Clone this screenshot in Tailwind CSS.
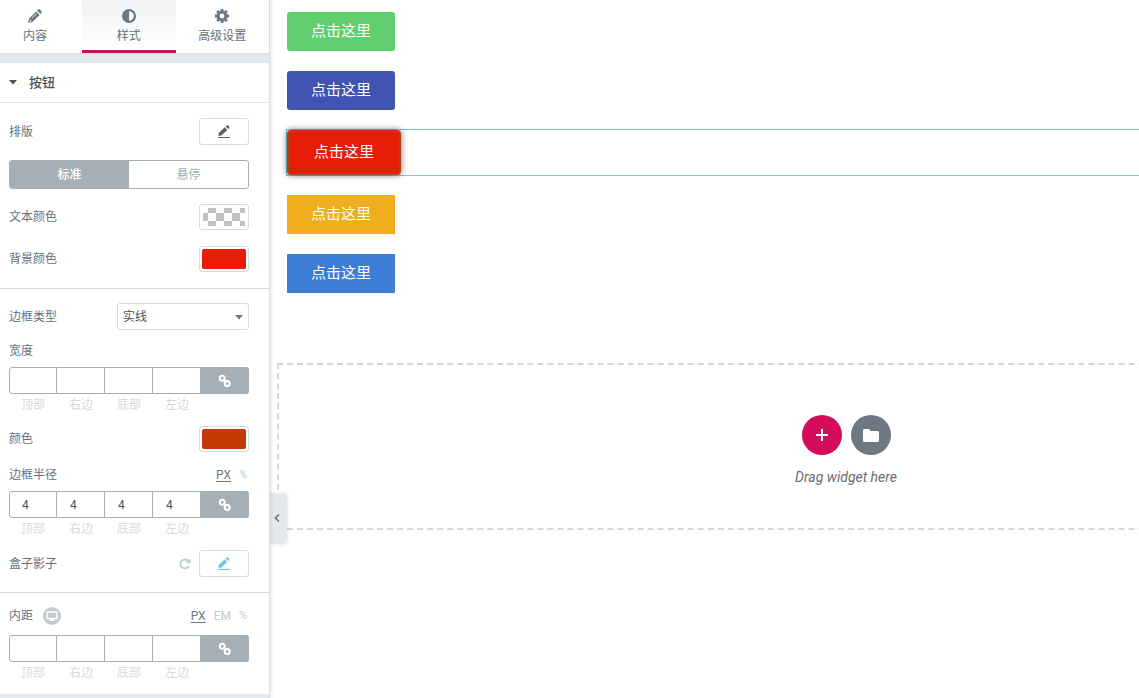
<!DOCTYPE html>
<html lang="zh-CN">
<head>
    <meta charset="UTF-8">
    <meta name="viewport" content="width=device-width, initial-scale=1.0">
    <title>按钮</title>
    <script src="https://cdn.jsdelivr.net/npm/@tailwindcss/browser@4"></script>
</head>
<body class="flex h-screen overflow-hidden bg-white font-['Roboto','Noto_Sans_CJK_SC',sans-serif] text-xs text-[#66717a]">
    <!-- Shared icons -->
    <svg class="hidden">
        <symbol id="link" viewBox="0 0 14 14">
            <g fill="none" stroke="currentColor" stroke-width="2">
                <circle cx="4.200" cy="4.200" r="2.500"/>
                <circle cx="9.200" cy="9.400" r="2.500"/>
                <path d="M5.200 5.200l3 3"/>
            </g>
        </symbol>
        <symbol id="edit" viewBox="0 0 14 14">
            <path fill="currentColor" d="M1.400 10.900l.4-2.900 5.900-5.700 2.600 2.600-5.900 5.700zM8.600 1.500l.9-.9c.5-.5 1.100-.5 1.600 0l1 1c.5.5.5 1.100 0 1.600l-.9.9zM1 12h12v1H1z"/>
        </symbol>
    </svg>

    <!-- Panel -->
    <aside class="z-10 flex w-[270px] shrink-0 flex-col border-r border-[#dcdfe2] bg-[#e6e9ec] shadow-[1px_0_4px_rgba(0,0,0,0.12)]">
        <nav class="flex h-[53px] shrink-0 bg-white shadow-xs">
            <button class="flex w-[82px] flex-col items-center gap-1 pt-2 pr-3">
                <svg class="size-4 text-[#6d7882]" viewBox="0 0 16 16" fill="currentColor"><path fill-rule="evenodd" d="M1.200 14.800l.8-4.300 7.100-7.100 3.500 3.500-7.100 7.100zM3 11.400l-.4 1.400.7.700 1.400-.4zM4.600 9.900l.4.400 4.400-4.400-.4-.4z"/><path d="M9.900 2.600l1-1c.6-.6 1.300-.6 1.900 0l1.600 1.600c.6.6.6 1.300 0 1.900l-1 1z"/></svg>
                <span class="leading-4">内容</span>
            </button>
            <button class="flex flex-1 flex-col items-center gap-1 border-b-3 border-[#b51a5e] bg-linear-to-b from-[#f1f2f3] to-white pt-2">
                <svg class="size-4 text-[#6d7882]" viewBox="0 0 16 16" fill="currentColor"><path fill-rule="evenodd" d="M8 1a7 7 0 1 0 0 14A7 7 0 0 0 8 1zm0 2.200v9.600a4.800 4.800 0 0 1 0-9.600z" transform="matrix(-1 0 0 1 16 0)"/></svg>
                <span class="leading-4">样式</span>
            </button>
            <button class="flex flex-1 flex-col items-center gap-1 pt-2">
                <svg class="size-4 text-[#6d7882]" viewBox="0 0 16 16"><circle cx="8" cy="8" r="3.900" fill="none" stroke="currentColor" stroke-width="3"/><path fill="none" stroke="currentColor" stroke-width="2.800" d="M8 1v2.500M8 12.500V15M1 8h2.500M12.500 8H15M3.100 3.100l1.700 1.700M11.200 11.200l1.700 1.700M3.100 12.900l1.700-1.700M11.200 4.800l1.700-1.700"/></svg>
                <span class="leading-4">高级设置</span>
            </button>
        </nav>

        <div class="mt-[10px] bg-white">
            <button class="flex h-10 w-full items-center gap-3 border-b border-[#e6e9ec] pl-[9px] text-[13px] font-medium text-[#495157]">
                <svg class="w-2" viewBox="0 0 8 5" fill="currentColor"><path d="M0 0h8L4 4.500z"/></svg>
                按钮
            </button>

            <!-- Typography and colours -->
            <section class="border-b border-[#d5dadf] pt-[15px] pr-5 pb-4 pl-[9px]">
                <div class="flex items-center justify-between">
                    <span>排版</span>
                    <button aria-label="排版" class="flex h-[27px] w-[50px] items-center justify-center rounded-[3px] border border-[#d5dadf] text-[#556068]">
                        <svg class="size-[14px]"><use href="#edit"/></svg>
                    </button>
                </div>
                <div class="mt-[15px] flex h-[29px] overflow-hidden rounded-[3px] border border-[#a4afb7] text-[#a4afb7]">
                    <button class="flex-1 bg-[#a4afb7] font-medium text-white">标准</button>
                    <button class="flex-1">悬停</button>
                </div>
                <div class="mt-[15px] flex items-center justify-between">
                    <span>文本颜色</span>
                    <button aria-label="文本颜色" class="h-[26px] w-[50px] rounded-[3px] border border-[#d5dadf] p-[3px]">
                        <svg class="h-[18px] w-[42px]" viewBox="0 0 42 18" fill="#c2c2c2"><path d="M5 0h8v5H5zM21 0h8v5h-8zM37 0h5v5h-5zM0 5h5v8H0zM13 5h8v8h-8zM29 5h8v8h-8zM5 13h8v5H5zM21 13h8v5h-8zM37 13h5v5h-5z"/></svg>
                    </button>
                </div>
                <div class="mt-4 flex items-center justify-between">
                    <span>背景颜色</span>
                    <button aria-label="背景颜色" class="h-[26px] w-[50px] rounded-[3px] border border-[#d5dadf] p-[2px]"><span class="block h-full rounded-xs bg-[#e71e07]"></span></button>
                </div>
            </section>

            <!-- Border -->
            <section class="border-b border-[#d5dadf] pt-[14px] pr-5 pb-[15px] pl-[9px]">
                <div class="flex items-center justify-between">
                    <label for="border">边框类型</label>
                    <div class="relative">
                        <select id="border" class="h-[27px] w-[132px] appearance-none rounded-[3px] border border-[#d5dadf] bg-white pl-[5px] text-[#495157]">
                            <option>实线</option>
                        </select>
                        <svg class="pointer-events-none absolute top-3 right-[6px] w-2 text-[#6d7882]" viewBox="0 0 8 5" fill="currentColor"><path d="M0 0h8L4 4.500z"/></svg>
                    </div>
                </div>
                <p class="mt-[13px] leading-4">宽度</p>
                <div class="mt-2 grid grid-cols-5">
                    <input id="w-top" class="h-[27px] min-w-0 rounded-l-[3px] border border-[#a4afb7] pl-3">
                    <input id="w-right" class="h-[27px] min-w-0 border-y border-r border-[#a4afb7] pl-3">
                    <input id="w-bottom" class="h-[27px] min-w-0 border-y border-r border-[#a4afb7] pl-3">
                    <input id="w-left" class="h-[27px] min-w-0 border-y border-[#a4afb7] pl-3">
                    <button aria-label="链接" class="-ml-px flex items-center justify-center rounded-r-[3px] bg-[#a4afb7] text-white"><svg class="size-[14px]"><use href="#link"/></svg></button>
                </div>
                <div class="mt-[3px] grid grid-cols-5 text-center leading-4 text-[#d5dadf]">
                    <label for="w-top">顶部</label><label for="w-right">右边</label><label for="w-bottom">底部</label><label for="w-left">左边</label>
                </div>
                <div class="mt-[13px] flex items-center justify-between">
                    <span>颜色</span>
                    <button aria-label="颜色" class="h-[26px] w-[50px] rounded-[3px] border border-[#d5dadf] p-[2px]"><span class="block h-full rounded-xs bg-[#c33a07]"></span></button>
                </div>
                <div class="mt-[15px] flex justify-between leading-4">
                    <span>边框半径</span>
                    <div class="flex gap-2 pr-[2px] text-[#c2cbd2]">
                        <button class="text-[#6d7882] underline underline-offset-2">PX</button>
                        <button class="text-[11px]">%</button>
                    </div>
                </div>
                <div class="mt-2 grid grid-cols-5 text-[#495157]">
                    <input id="r-top" value="4" class="h-[27px] min-w-0 rounded-l-[3px] border border-[#a4afb7] pl-3">
                    <input id="r-right" value="4" class="h-[27px] min-w-0 border-y border-r border-[#a4afb7] pl-[13px]">
                    <input id="r-bottom" value="4" class="h-[27px] min-w-0 border-y border-r border-[#a4afb7] pl-[13px]">
                    <input id="r-left" value="4" class="h-[27px] min-w-0 border-y border-[#a4afb7] pl-[13px]">
                    <button aria-label="链接" class="-ml-px flex items-center justify-center rounded-r-[3px] bg-[#a4afb7] text-white"><svg class="size-[14px]"><use href="#link"/></svg></button>
                </div>
                <div class="mt-[3px] grid grid-cols-5 text-center leading-4 text-[#d5dadf]">
                    <label for="r-top">顶部</label><label for="r-right">右边</label><label for="r-bottom">底部</label><label for="r-left">左边</label>
                </div>
                <div class="mt-[13px] flex items-center">
                    <span>盒子影子</span>
                    <button aria-label="重置" class="mr-2 ml-auto text-[#c2cbd2]">
                        <svg class="size-3" viewBox="0 0 12 12"><path fill="none" stroke="currentColor" stroke-width="2" d="M9.800 8.300A4.500 4.500 0 1 1 9.400 3"/><path fill="currentColor" d="M11.500.6v4.600H6.900z"/></svg>
                    </button>
                    <button aria-label="盒子影子" class="flex h-[27px] w-[50px] items-center justify-center rounded-[3px] border border-[#d5dadf] text-[#6ec9e4]">
                        <svg class="size-[14px]"><use href="#edit"/></svg>
                    </button>
                </div>
            </section>

            <!-- Padding -->
            <section class="pt-[13px] pr-5 pb-[13px] pl-[9px]">
                <div class="flex h-5 items-center">
                    <span>内距</span>
                    <button aria-label="桌面" class="ml-[10px] flex size-[18px] items-center justify-center rounded-full bg-[#c2cbd2] text-white">
                        <svg class="size-3" viewBox="0 0 12 12"><path fill="none" stroke="currentColor" stroke-width="1.300" d="M1 2h10v6.500H1z"/><path fill="currentColor" d="M3.500 9h5v2h-5z"/></svg>
                    </button>
                    <div class="ml-auto flex gap-2 pr-[2px] leading-4 text-[#c2cbd2]">
                        <button class="text-[#6d7882] underline underline-offset-2">PX</button>
                        <button>EM</button>
                        <button class="text-[11px]">%</button>
                    </div>
                </div>
                <div class="mt-[9px] grid grid-cols-5">
                    <input id="p-top" class="h-[27px] min-w-0 rounded-l-[3px] border border-[#a4afb7] pl-3">
                    <input id="p-right" class="h-[27px] min-w-0 border-y border-r border-[#a4afb7] pl-3">
                    <input id="p-bottom" class="h-[27px] min-w-0 border-y border-r border-[#a4afb7] pl-3">
                    <input id="p-left" class="h-[27px] min-w-0 border-y border-[#a4afb7] pl-3">
                    <button aria-label="链接" class="-ml-px flex items-center justify-center rounded-r-[3px] bg-[#a4afb7] text-white"><svg class="size-[14px]"><use href="#link"/></svg></button>
                </div>
                <div class="mt-[3px] grid grid-cols-5 text-center leading-4 text-[#d5dadf]">
                    <label for="p-top">顶部</label><label for="p-right">右边</label><label for="p-bottom">底部</label><label for="p-left">左边</label>
                </div>
            </section>
        </div>
    </aside>

    <!-- Preview -->
    <main class="relative min-w-0 flex-1 overflow-hidden">
        <div class="flex flex-col items-start gap-5 pt-3 pl-[17px] text-[15px] leading-[15px] text-white">
            <a href="#" class="rounded-[3px] bg-[#61ce70] px-6 py-3">点击这里</a>
            <a href="#" class="rounded-[3px] bg-[#4054b2] px-6 py-3">点击这里</a>
            <div class="flex w-full ring-1 ring-[#7cc9d9]">
                <a href="#" class="rounded-[4px] border-2 border-[#ab4419] bg-[#e71e07] px-[25px] py-[13px] shadow-[0_0_6px_rgba(0,0,0,0.6)]">点击这里</a>
            </div>
            <a href="#" class="bg-[#efae1d] px-6 py-3">点击这里</a>
            <a href="#" class="bg-[#3d7dd6] px-6 py-3">点击这里</a>
        </div>

        <div class="mt-[70px] ml-[7px] flex w-[1138px] flex-col items-center border-2 border-dashed border-[#d5d8da] pt-[50px] pb-[41px]">
            <div class="flex gap-[9px]">
                <button aria-label="Add" class="flex size-10 items-center justify-center rounded-full bg-[#d30c5c] text-white">
                    <svg class="size-3" viewBox="0 0 12 12" fill="none" stroke="currentColor" stroke-width="2"><path d="M6 0v12M0 6h12"/></svg>
                </button>
                <button aria-label="Template" class="flex size-10 items-center justify-center rounded-full bg-[#6d7882] text-white">
                    <svg class="h-[13px] w-4" viewBox="0 0 16 13" fill="currentColor"><path d="M1.500 0H6l1.500 2h7A1.500 1.500 0 0 1 16 3.500v8a1.500 1.500 0 0 1-1.500 1.500h-13A1.500 1.500 0 0 1 0 11.500v-10A1.500 1.500 0 0 1 1.500 0z"/></svg>
                </button>
            </div>
            <p class="mt-3 text-sm leading-5 text-[#6a6e71] italic">Drag widget here</p>
        </div>

        <button aria-label="收起" class="absolute top-[493px] left-0 flex h-[50px] w-4 items-center rounded-r-[3px] bg-[#e6e9ec] pl-1 text-[#556068] shadow-[1px_1px_4px_rgba(0,0,0,0.15)]">
            <svg class="h-2 w-[6px]" viewBox="0 0 6 8" fill="none" stroke="currentColor" stroke-width="1.200"><path d="M5 .5L1.300 4 5 7.500"/></svg>
        </button>
    </main>
</body>
</html>
